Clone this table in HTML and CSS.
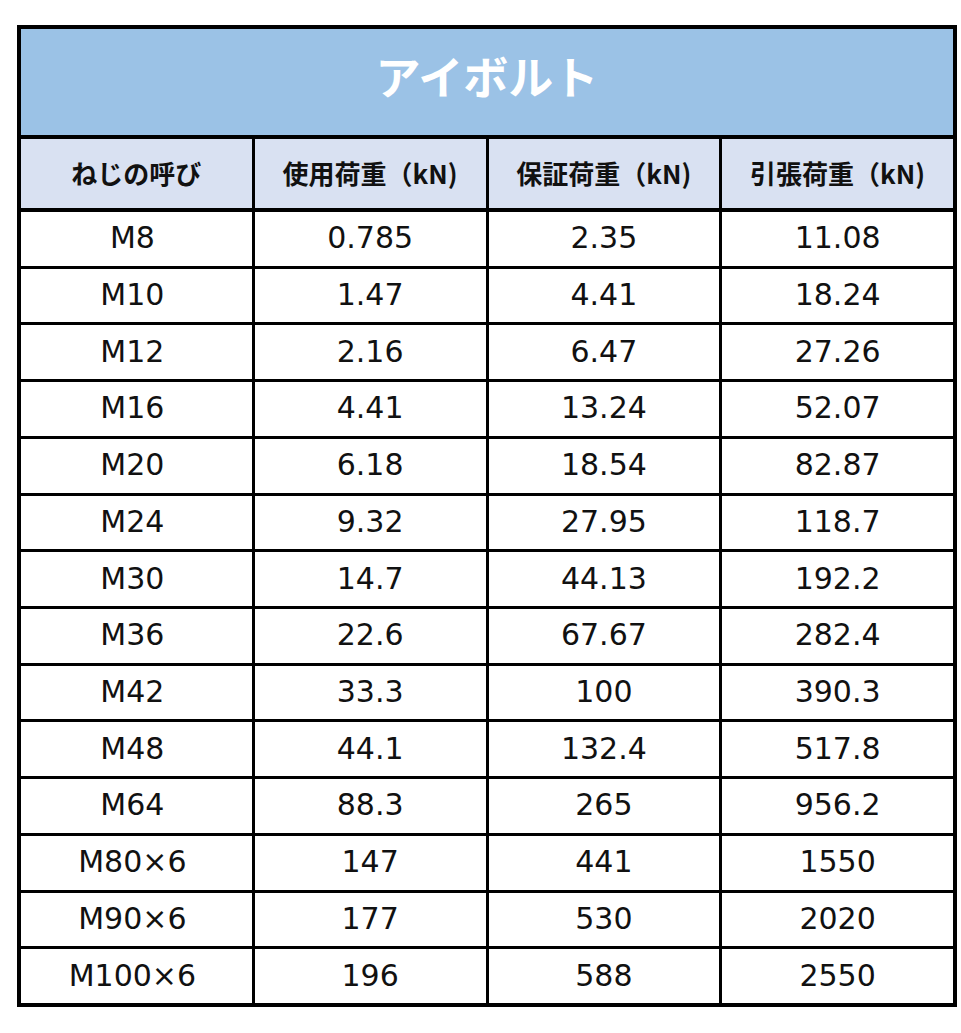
FILE: index.html
```html
<!DOCTYPE html>
<html lang="ja">
<head>
<meta charset="utf-8">
<title>アイボルト</title>
<link rel="stylesheet" href="styles.css">
</head>
<body>
<div class="sheet">
  <div class="title">アイボルト</div>
  <div class="head">
    <div class="hcell">ねじの呼び</div>
    <div class="hcell">使用荷重（kN)</div>
    <div class="hcell">保証荷重（kN)</div>
    <div class="hcell">引張荷重（kN)</div>
  </div>
  <div class="body">
    <div class="cell">M8</div><div class="cell">0.785</div><div class="cell">2.35</div><div class="cell">11.08</div>
    <div class="cell">M10</div><div class="cell">1.47</div><div class="cell">4.41</div><div class="cell">18.24</div>
    <div class="cell">M12</div><div class="cell">2.16</div><div class="cell">6.47</div><div class="cell">27.26</div>
    <div class="cell">M16</div><div class="cell">4.41</div><div class="cell">13.24</div><div class="cell">52.07</div>
    <div class="cell">M20</div><div class="cell">6.18</div><div class="cell">18.54</div><div class="cell">82.87</div>
    <div class="cell">M24</div><div class="cell">9.32</div><div class="cell">27.95</div><div class="cell">118.7</div>
    <div class="cell">M30</div><div class="cell">14.7</div><div class="cell">44.13</div><div class="cell">192.2</div>
    <div class="cell">M36</div><div class="cell">22.6</div><div class="cell">67.67</div><div class="cell">282.4</div>
    <div class="cell">M42</div><div class="cell">33.3</div><div class="cell">100</div><div class="cell">390.3</div>
    <div class="cell">M48</div><div class="cell">44.1</div><div class="cell">132.4</div><div class="cell">517.8</div>
    <div class="cell">M64</div><div class="cell">88.3</div><div class="cell">265</div><div class="cell">956.2</div>
    <div class="cell">M80×6</div><div class="cell">147</div><div class="cell">441</div><div class="cell">1550</div>
    <div class="cell">M90×6</div><div class="cell">177</div><div class="cell">530</div><div class="cell">2020</div>
    <div class="cell">M100×6</div><div class="cell">196</div><div class="cell">588</div><div class="cell">2550</div>
  </div>
</div>
</body>
</html>
```
FILE: styles.css
```css
html, body {
  margin: 0;
  padding: 0;
  background: #fff;
}

body {
  padding: 25px 0 0 17px;
}

.sheet {
  width: 932px;
  border: 4px solid #000;
  background: #000;
  display: flex;
  flex-direction: column;
  gap: 4px;
}

.title {
  height: 106px;
  background: #9bc2e6;
  color: #fff;
  font-family: "Noto Sans CJK JP", sans-serif;
  font-weight: 700;
  font-size: 45px;
  display: flex;
  align-items: center;
  justify-content: center;
  padding-bottom: 14px;
  box-sizing: border-box;
}

.head {
  height: 69px;
  display: grid;
  grid-template-columns: repeat(4, 1fr);
  column-gap: 3px;
}

.hcell {
  background: #d9e1f2;
  font-family: "Noto Sans CJK JP", sans-serif;
  font-weight: 700;
  font-size: 26px;
  color: #111;
  display: flex;
  align-items: center;
  justify-content: center;
  padding-bottom: 3px;
  box-sizing: border-box;
}

.body {
  height: 791px;
  display: grid;
  grid-template-columns: repeat(4, 1fr);
  grid-template-rows: repeat(14, 1fr);
  gap: 3px;
}

.cell {
  background: #fff;
  font-family: "DejaVu Sans", Verdana, sans-serif;
  font-size: 30px;
  color: #111;
  display: flex;
  align-items: center;
  justify-content: center;
  padding-bottom: 2px;
  box-sizing: border-box;
}

.cell:nth-child(4n+1) {
  padding-right: 8px;
}
```
